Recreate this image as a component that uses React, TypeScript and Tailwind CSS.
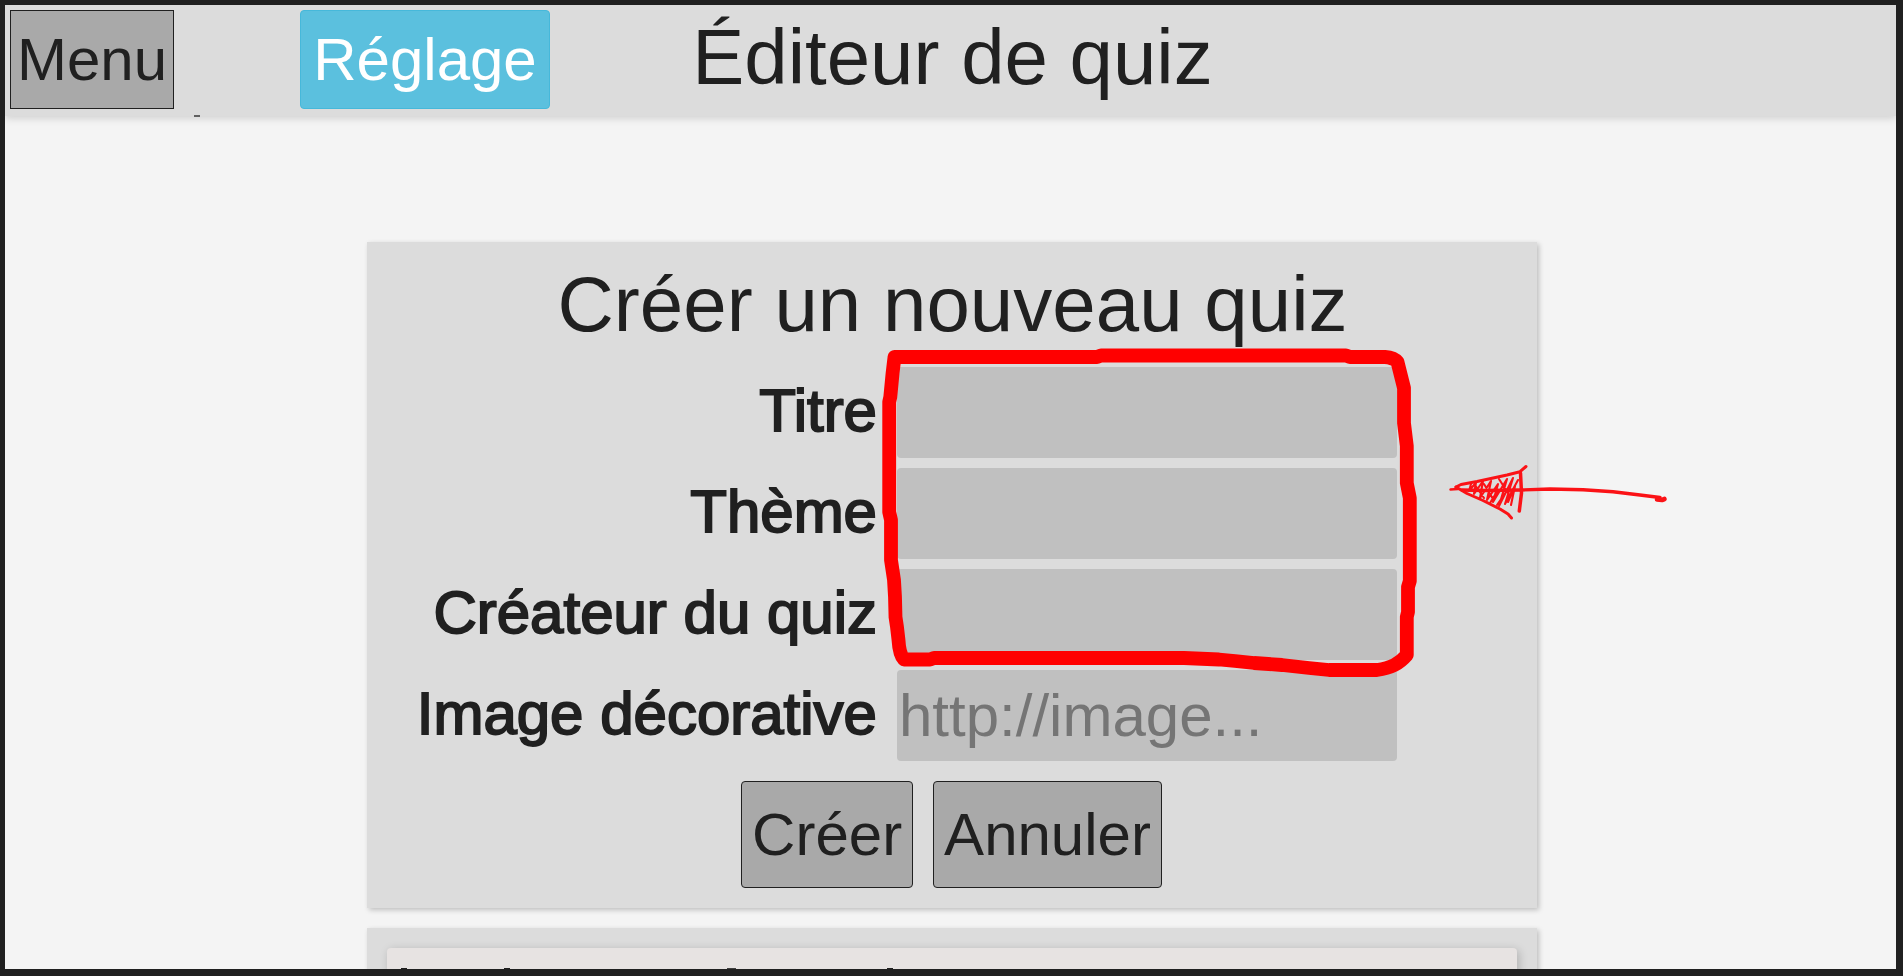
import React from "react";

function Field({ label, placeholder }: { label: string; placeholder?: string }) {
  return (
    <label className="flex h-[91px] items-center">
      <span className="mt-[-4px] w-[510px] text-right leading-[86px] [-webkit-text-stroke:1.9px_#202020]">{label}</span>
      <input
        type="text"
        placeholder={placeholder}
        className="ml-[20px] h-[91px] w-[500px] rounded-[4px] bg-[#c0c0c0] px-[2px] text-[60px] text-[#202020] outline-none placeholder:text-[#757575]"
      />
    </label>
  );
}

function FormButton({ children }: { children: React.ReactNode }) {
  return (
    <button className="h-[107px] rounded-[4px] border border-[#202020] bg-[#a9a9a9] px-[10px] leading-[86px]">
      {children}
    </button>
  );
}

function Annotation() {
  return (
    <svg
      className="pointer-events-none absolute left-0 top-0"
      width="1903"
      height="976"
      viewBox="0 0 1903 976"
      fill="none"
      stroke="#ff0000"
      strokeLinecap="round"
      strokeLinejoin="round"
    >
      <path
        strokeWidth="13.800"
        d="M895 357H1097L1101 355.500H1346L1350 357H1385C1391 357.500 1395 359 1397.500 362L1404 388V423L1406.800 446V483L1409.800 498V581L1408 587V612L1406.800 617V655C1399 664 1391 668 1377 670H1329L1309 668L1282 665L1254 663L1235 661L1219 659.500L1184 658H934L930 659.500H904C900 655 899 649 898.500 640L897 627L895.500 617L895 597L894 580L891 560V520L889.200 512V402L890.300 397L892.600 373L894.500 357Z"
      />
      <g stroke="#fb1216">
        <path strokeWidth="2.500" d="M1450.500 489.500L1458 489" />
        <path strokeWidth="3.400" d="M1462 490L1485 490.500 1521 490 1550 489 1583 489.700 1613 491.700 1640 495 1660 497.500" />
        <path strokeWidth="4.600" d="M1657 499.500L1662 500 1664.500 499" />
        <path strokeWidth="3" d="M1456 487L1461 484.500 1477 481.500 1507 475 1520 471.700 1526 466.500" />
        <path strokeWidth="3" d="M1456 487L1467 493.500 1483 500.500 1500 509 1508 514 1511.500 518" />
        <path strokeWidth="3.500" d="M1520.500 473L1521.500 493 1519.300 511" />
        <path
          strokeWidth="2.100"
          d="M1471 484L1469 491 1476 482.500 1474 494 1483 481 1480 498 1491 481 1487 500 1498 484 1493 502 1507 479 1499 506 1513 478 1505 504 1518 480M1508 502L1515 486 1511 505M1475 485L1484 498M1484 484L1493 499M1499 479L1508 493M1490 503L1498 490M1497 505L1506 492"
        />
      </g>
    </svg>
  );
}

export default function App() {
  return (
    <div className="relative h-[976px] w-[1903px] overflow-hidden border-b-[7px] border-l-[5px] border-r-[7px] border-t-[5px] border-[#202020] bg-[#f4f4f4] font-['Liberation_Sans',Arial,sans-serif] text-[60px] text-[#202020]">
      <div className="flex h-full flex-col">
        <header className="relative grid h-[111px] shrink-0 grid-cols-[295px_1fr_295px] items-start bg-[#dcdcdc] shadow-[0_2px_8px_rgba(0,0,0,0.16)]">
          <div className="pl-[5px] pt-[5px]">
            <button className="h-[99px] w-[164px] border border-[#202020] bg-[#a9a9a9] leading-[86px]">Menu</button>
          </div>
          <div className="grid grid-cols-[250px_1fr_246px] pt-[5px]">
            <button className="h-[99px] rounded-[4px] border border-[#46b8da] bg-[#5bc0de] leading-[86px] text-white">
              Réglage
            </button>
            <h1 className="whitespace-nowrap text-center text-[78px] leading-[94px]">Éditeur de quiz</h1>
          </div>
          <span className="absolute left-[189px] top-[110px] h-[2px] w-[6px] bg-[#606060]" />
        </header>
        <main className="ml-[362px] mt-[126px] flex w-[1170px] shrink-0 flex-col gap-[20px]">
          <section className="flex h-[666px] flex-col bg-[#dcdcdc] shadow-[2px_2px_5px_rgba(0,0,0,0.22)]">
            <h2 className="mt-[16px] h-[109px] pl-[1px] text-center text-[78px] leading-[92px] tracking-[0.05px]">
              Créer un nouveau quiz
            </h2>
            <div className="flex flex-col gap-[10px]">
              <Field label="Titre" />
              <Field label="Thème" />
              <Field label="Créateur du quiz" />
              <Field label="Image décorative" placeholder="http://image..." />
            </div>
            <div className="mt-[20px] flex justify-center gap-[20px] pr-[1px]">
              <FormButton>Créer</FormButton>
              <FormButton>Annuler</FormButton>
            </div>
          </section>
          <section className="h-[80px] bg-[#dcdcdc] p-[20px] shadow-[2px_2px_5px_rgba(0,0,0,0.22)]">
            <div className="flex h-[60px] rounded-[4px] bg-[#e7e3e2] pt-[20px] shadow-[2px_2px_10px_rgba(0,0,0,0.2)]">
              <span className="ml-[14px] h-[2px] w-[6px] bg-[#202020]" />
              <span className="ml-[97px] h-[2px] w-[6px] bg-[#202020]" />
              <span className="ml-[217px] h-[2px] w-[9px] bg-[#404040]" />
              <span className="ml-[151px] h-[2px] w-[6px] bg-[#202020]" />
            </div>
          </section>
        </main>
      </div>
      <div className="absolute left-[-5px] top-[-5px]">
        <Annotation />
      </div>
    </div>
  );
}
